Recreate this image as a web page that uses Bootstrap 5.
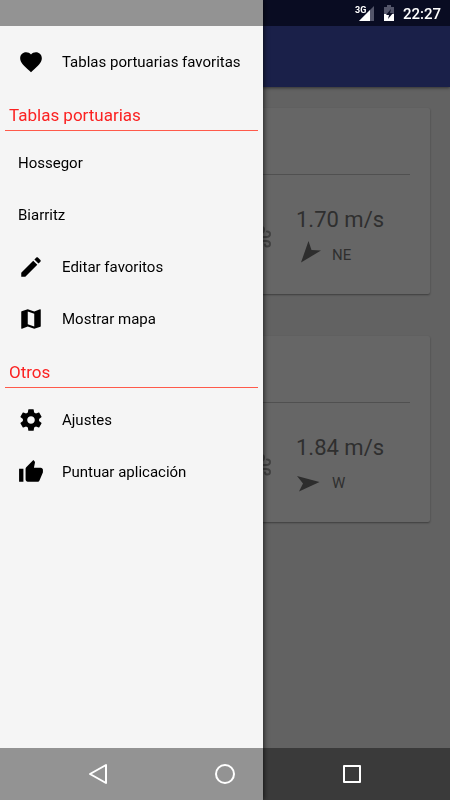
<!DOCTYPE html>
<html lang="es">
<head>
<meta charset="utf-8">
<meta name="viewport" content="width=device-width, initial-scale=1">
<title>Tablas portuarias</title>
<link href="https://cdn.jsdelivr.net/npm/bootstrap@5.3.0/dist/css/bootstrap.min.css" rel="stylesheet">
<style>
  body { font-family: Roboto, "Liberation Sans", sans-serif; background: #626262; color: #2f2f2f; }
  .app-bar { height: 87px; background: linear-gradient(#10153a 26px, #1a2049 26px); box-shadow: 0 1px 3px rgba(0,0,0,.5); }
  .ports { padding: 21px 20px 78px; gap: 42px; }
  .port-card { background: #666; border: 0; border-radius: 2px; box-shadow: 0 1px 2px rgba(0,0,0,.38); height: 186px; padding: 0 20px; }
  .port-title { height: 67px; border-bottom: 1px solid #505050; }
  .wind { padding-top: 30px; gap: 24px; }
  .wind-icon { margin-bottom: 6px; }
  .reading { width: 114px; }
  .speed { font-size: 22px; line-height: 30px; }
  .heading-row { height: 40px; gap: 8px; font-size: 15px; }
  .drawer { width: 263px; background: #f5f5f5; padding: 36px 0 52px; box-shadow: 1px 0 5px rgba(0,0,0,.65); z-index: 10; }
  .drawer-link { height: 52px; padding-left: 18px; gap: 18px; font-size: 15px; color: #000; }
  .drawer-link:hover { background: #e8e8e8; }
  .drawer-title { height: 43px; margin: 0 5px 6px; padding: 12px 4px 0; font-size: 17px; font-weight: 400; line-height: 24px; color: #fb2222; border-bottom: 1px solid #ff5a4a; }
  .system { background: rgba(0,0,0,.4); color: #fff; z-index: 20; }
  .status { height: 26px; padding: 2px 9px 0 0; gap: 8px; font-size: 15px; line-height: 24px; }
  .network { font-size: 9px; }
  .keys { height: 52px; padding: 0 35px; }
</style>
<script src="https://cdn.jsdelivr.net/npm/bootstrap@5.3.0/dist/js/bootstrap.bundle.min.js"></script>
</head>
<body class="min-vh-100">

<header class="app-bar position-relative"></header>

<main class="ports d-flex flex-column">
  <article class="card port-card">
    <div class="port-title"></div>
    <div class="wind d-flex justify-content-end align-items-center">
      <svg class="wind-icon" width="26" height="24" viewBox="0 0 26 24" fill="none" stroke="#424242" stroke-width="2" stroke-linecap="round" aria-hidden="true"><path d="M2 8h12q4 0 4-3.500q0-2.500-2.500-2.500M2 12h18q4 0 4-3q0-2.500-3-2.500M2 16h18q4 0 4 3q0 2.500-3 2.500q-2 0-2-2"/></svg>
      <div class="reading">
        <div class="speed">1.70 m/s</div>
        <div class="heading-row d-flex align-items-center">
          <svg width="28" height="28" viewBox="0 0 28 28" fill="#2d2d2d" aria-hidden="true"><path d="M12.500 0L15.500 9L25 9.500L5 21.500Z"/></svg>
          <span>NE</span>
        </div>
      </div>
    </div>
  </article>

  <article class="card port-card">
    <div class="port-title"></div>
    <div class="wind d-flex justify-content-end align-items-center">
      <svg class="wind-icon" width="26" height="24" viewBox="0 0 26 24" fill="none" stroke="#424242" stroke-width="2" stroke-linecap="round" aria-hidden="true"><path d="M2 8h12q4 0 4-3.500q0-2.500-2.500-2.500M2 12h18q4 0 4-3q0-2.500-3-2.500M2 16h18q4 0 4 3q0 2.500-3 2.500q-2 0-2-2"/></svg>
      <div class="reading">
        <div class="speed">1.84 m/s</div>
        <div class="heading-row d-flex align-items-center">
          <svg width="28" height="28" viewBox="0 0 28 28" fill="#2d2d2d" aria-hidden="true"><path d="M1 7L23.500 13L3 22.500L7 14.500Z"/></svg>
          <span>W</span>
        </div>
      </div>
    </div>
  </article>
</main>

<nav class="drawer position-fixed top-0 start-0 bottom-0 overflow-auto" aria-label="Menú">
  <a href="#favoritas" class="drawer-link d-flex align-items-center text-decoration-none">
    <svg width="26" height="26" viewBox="0 0 24 24" aria-hidden="true"><path d="M12 21.350l-1.450-1.320C5.400 15.360 2 12.280 2 8.500 2 5.420 4.420 3 7.500 3c1.740 0 3.410.81 4.500 2.090C13.090 3.810 14.760 3 16.500 3 19.580 3 22 5.420 22 8.500c0 3.780-3.400 6.860-8.550 11.540L12 21.350z"/></svg>
    <span>Tablas portuarias favoritas</span>
  </a>

  <h2 class="drawer-title d-flex align-items-center">Tablas portuarias</h2>
  <a href="#hossegor" class="drawer-link d-flex align-items-center text-decoration-none">Hossegor</a>
  <a href="#biarritz" class="drawer-link d-flex align-items-center text-decoration-none">Biarritz</a>
  <a href="#editar" class="drawer-link d-flex align-items-center text-decoration-none">
    <svg width="26" height="26" viewBox="0 0 24 24" aria-hidden="true"><path d="M3 17.250V21h3.750L17.810 9.940l-3.750-3.750L3 17.250zM20.710 7.040c.39-.39.39-1.020 0-1.410l-2.340-2.340c-.39-.39-1.020-.39-1.410 0l-1.830 1.830 3.750 3.750 1.830-1.830z"/></svg>
    <span>Editar favoritos</span>
  </a>
  <a href="#mapa" class="drawer-link d-flex align-items-center text-decoration-none">
    <svg width="26" height="26" viewBox="0 0 24 24" aria-hidden="true"><path d="M20.500 3l-.16.03L15 5.100 9 3 3.360 4.900c-.21.07-.36.25-.36.48V20.500c0 .28.22.5.5.5l.16-.03L9 18.900l6 2.100 5.640-1.900c.21-.07.36-.25.36-.48V3.500c0-.28-.22-.5-.5-.5zM15 19l-6-2.110V5l6 2.110V19z"/></svg>
    <span>Mostrar mapa</span>
  </a>

  <h2 class="drawer-title d-flex align-items-center">Otros</h2>
  <a href="#ajustes" class="drawer-link d-flex align-items-center text-decoration-none">
    <svg width="26" height="26" viewBox="0 0 24 24" aria-hidden="true"><path d="M19.430 12.980c.04-.32.07-.64.07-.98s-.03-.66-.07-.98l2.110-1.650c.19-.15.24-.42.12-.64l-2-3.460c-.12-.22-.39-.3-.61-.22l-2.490 1c-.52-.4-1.080-.73-1.690-.98l-.38-2.650C14.460 2.180 14.250 2 14 2h-4c-.25 0-.46.18-.49.42l-.38 2.650c-.61.25-1.170.59-1.690.98l-2.490-1c-.23-.09-.49 0-.61.22l-2 3.460c-.13.22-.07.49.12.64l2.110 1.650c-.04.32-.07.65-.07.98s.03.66.07.98l-2.110 1.650c-.19.15-.24.42-.12.64l2 3.460c.12.22.39.3.61.22l2.490-1c.52.4 1.080.73 1.690.98l.38 2.650c.03.24.24.42.49.42h4c.25 0 .46-.18.49-.42l.38-2.650c.61-.25 1.170-.59 1.690-.98l2.490 1c.23.09.49 0 .61-.22l2-3.460c.12-.22.07-.49-.12-.64l-2.110-1.650zM12 15.500c-1.930 0-3.500-1.570-3.500-3.500s1.570-3.500 3.500-3.500 3.500 1.570 3.500 3.500-1.570 3.500-3.500 3.500z"/></svg>
    <span>Ajustes</span>
  </a>
  <a href="#puntuar" class="drawer-link d-flex align-items-center text-decoration-none">
    <svg width="26" height="26" viewBox="0 0 24 24" aria-hidden="true"><path d="M1 21h4V9H1v12zm22-11c0-1.100-.9-2-2-2h-6.310l.95-4.570.03-.32c0-.41-.17-.79-.44-1.060L14.170 1 7.590 7.590C7.220 7.950 7 8.450 7 9v10c0 1.100.9 2 2 2h9c.83 0 1.540-.5 1.840-1.220l3.020-7.050c.09-.23.14-.47.14-.73V10z"/></svg>
    <span>Puntuar aplicación</span>
  </a>
</nav>

<div class="system status position-fixed top-0 start-0 end-0 d-flex align-items-center justify-content-end">
  <svg width="21" height="18" viewBox="0 0 21 18" role="img" aria-label="Señal 3G"><path d="M20 1V16H5Z" fill="#54566a"/><path d="M16 5V16H5Z" fill="#fff"/><text class="network" x="1" y="8" fill="#fff" font-weight="700" stroke="#0a0d23" stroke-width="2" paint-order="stroke">3G</text></svg>
  <svg width="12" height="18" viewBox="0 0 12 18" aria-hidden="true"><path d="M1 2h3V0h4v2h3v14H1Z" fill="#54566a"/><path d="M1 9h10v7H1Z" fill="#fff"/><path d="M8 4L3 10h3l-1 4 5-6H7Z" fill="#0a0d23"/></svg>
  <span class="fw-medium time">22:27</span>
</div>

<div class="system keys position-fixed bottom-0 start-0 end-0 d-flex">
  <button type="button" class="btn border-0 rounded-0 p-0 flex-fill w-100" aria-label="Atrás"><svg width="24" height="24" viewBox="0 0 24 24" fill="none" stroke="#fff" stroke-width="2" stroke-linejoin="round"><path d="M20 3V21L4 12Z"/></svg></button>
  <button type="button" class="btn border-0 rounded-0 p-0 flex-fill w-100" aria-label="Inicio"><svg width="24" height="24" viewBox="0 0 24 24" fill="none" stroke="#fff" stroke-width="2"><circle cx="12" cy="12" r="9"/></svg></button>
  <button type="button" class="btn border-0 rounded-0 p-0 flex-fill w-100" aria-label="Recientes"><svg width="24" height="24" viewBox="0 0 24 24" fill="none" stroke="#fff" stroke-width="2" stroke-linejoin="round"><path d="M4 4H20V20H4Z"/></svg></button>
</div>

</body>
</html>
